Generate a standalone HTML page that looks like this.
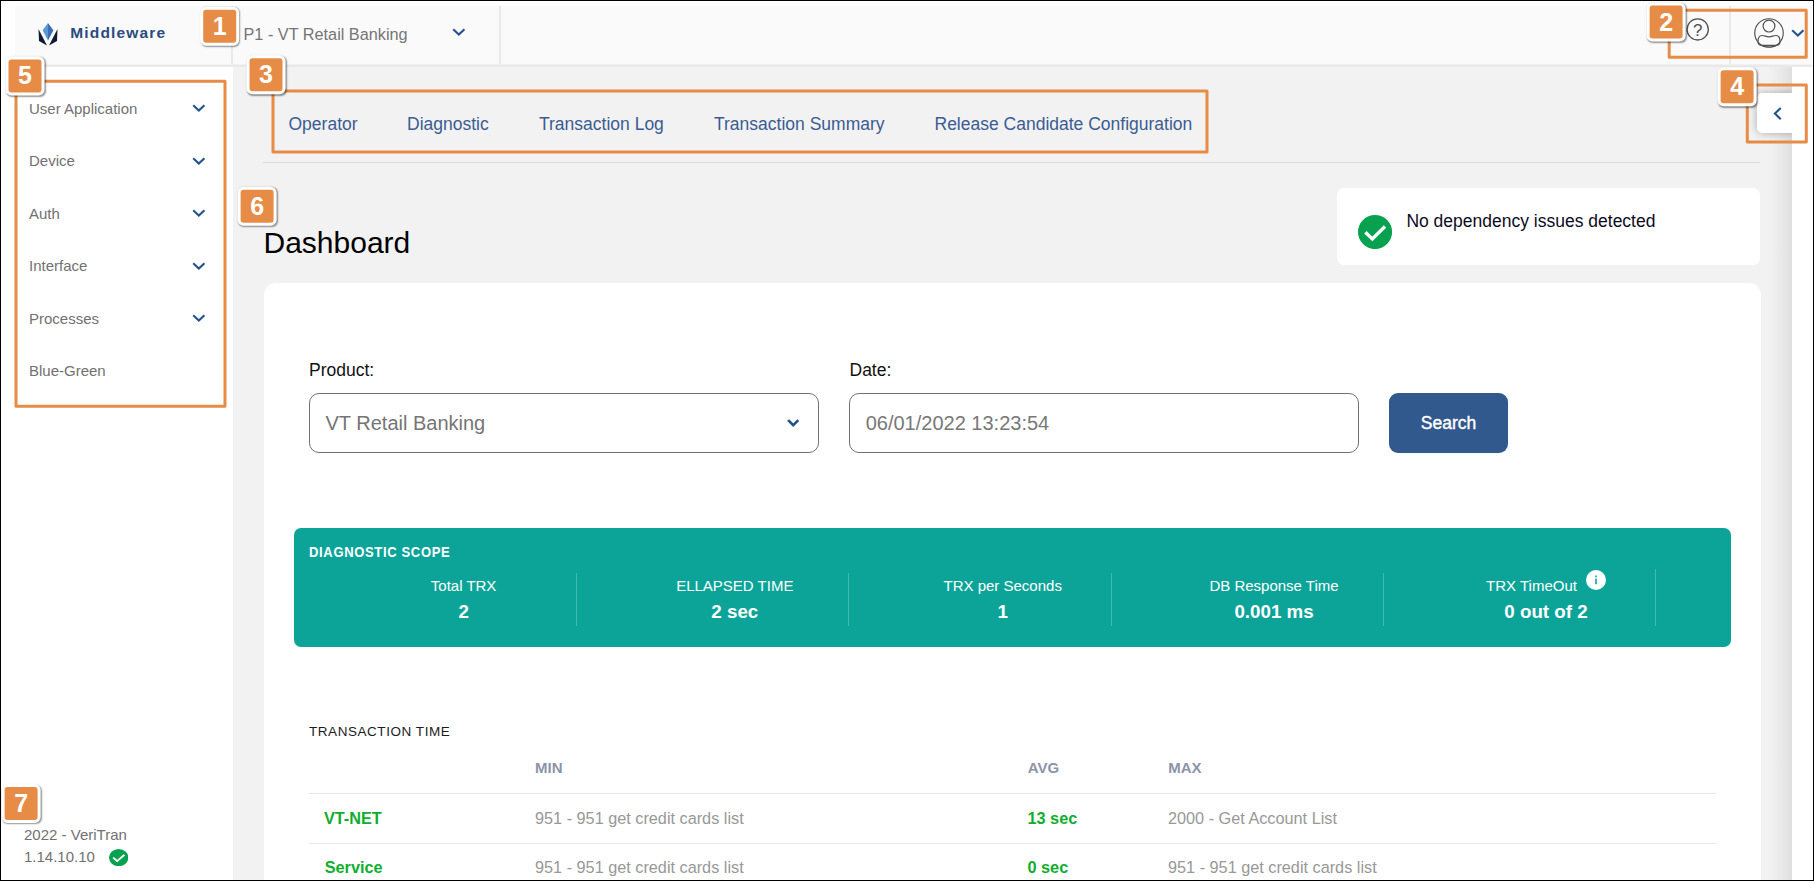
<!DOCTYPE html>
<html lang="en"><head><meta charset="utf-8"><title>Middleware Dashboard</title>
<style>
html,body{margin:0;padding:0;}
body{width:1814px;height:881px;position:relative;overflow:hidden;background:#fff;font-family:"Liberation Sans",Arial,sans-serif;}
.b{position:absolute;box-sizing:content-box;}
.t{position:absolute;line-height:1;white-space:nowrap;margin:0;padding:0;font-weight:400;text-decoration:none;}
.badge{position:absolute;box-sizing:content-box;border:3px solid #fff;border-radius:6px;background:#e68c46;color:#fff;font-weight:700;font-size:25px;line-height:32.6px;text-align:center;box-shadow:0.8px 1px 1.6px rgba(0,0,0,.42);}
</style></head><body>

<header>
<div class="b" style="left:15px;top:6px;width:1797px;height:59px;background:#fafafa;"></div>
<div class="b" style="left:15px;top:64px;width:1797px;height:1px;background:#f1f1f1;"></div>
<div class="b" style="left:15px;top:65px;width:1797px;height:2px;background:#e9e9e9;"></div>
<div class="b" style="left:231.1px;top:6px;width:1.8px;height:58px;background:#e9e9e9;"></div>
<div class="b" style="left:499.2px;top:6px;width:1.9px;height:58px;background:#e9e9e9;"></div>
<div class="b" style="left:1728.9px;top:6px;width:1.8px;height:58px;background:#e9e9e9;"></div>
<svg class="b" style="left:36.6px;top:22px" width="22" height="24" viewBox="0 0 22 24">
<path d="M11 1 L5.6 8.2 L11 18.5 Z" fill="#5b9bd5"/>
<path d="M11 1 L16.4 8.2 L11 18.5 Z" fill="#3b6eb5"/>
<path d="M1.5 7 L2 19 L10 23.5 Z" fill="#0f1a33"/>
<path d="M20.5 7 L20 19 L12 23.5 Z" fill="#0f1a33"/>
</svg>
<div class="t" style="left:70.3px;top:25px;font-size:15.5px;color:#2a4a80;font-weight:700;letter-spacing:1.15px;">Middleware</div>
<div class="t" style="left:243.5px;top:26px;font-size:16.25px;color:#757575;">P1 - VT Retail Banking</div>
<svg class="b" style="left:452.45px;top:28.1px" width="13.7" height="8.6" viewBox="0 0 13.7 8.6"><path d="M2 2 L6.85 6.6 L11.7 2" fill="none" stroke="#24528f" stroke-width="2.1" stroke-linecap="square" stroke-linejoin="miter"/></svg>
<svg class="b" style="left:1685px;top:17px" width="26" height="26" viewBox="0 0 26 26"><circle cx="12.7" cy="12.4" r="10.6" fill="none" stroke="#505050" stroke-width="1.3"/></svg>
<div class="t" style="left:1697.7px;transform:translateX(-50%);top:22px;font-size:17px;color:#505050;">?</div>
<svg class="b" style="left:1753px;top:17px" width="32" height="32" viewBox="0 0 32 32">
<circle cx="16" cy="16" r="14.25" fill="none" stroke="#505050" stroke-width="1.15"/>
<circle cx="16" cy="9.1" r="5.9" fill="none" stroke="#505050" stroke-width="1.2"/>
<path d="M5 24.6 C5 21 6.6 18.5 9.2 18.5 C11.8 18.5 13 19.8 16 19.8 C19 19.8 20.2 18.5 22.8 18.5 C25.4 18.5 27 21 27 24.6 C27 27 25.2 28.4 23 28.4 L9 28.4 C6.8 28.4 5 27 5 24.6 Z" fill="none" stroke="#505050" stroke-width="1.2"/>
<path d="M9.5 29.3 Q16 30.6 22.5 29.3" fill="none" stroke="#505050" stroke-width="1.1"/>
</svg>
<svg class="b" style="left:1791.25px;top:29.0px" width="13.7" height="8.6" viewBox="0 0 13.7 8.6"><path d="M2 2 L6.85 6.6 L11.7 2" fill="none" stroke="#24528f" stroke-width="2.1" stroke-linecap="square" stroke-linejoin="miter"/></svg>
</header>
<aside>
<div class="t" style="left:29px;top:101px;font-size:15px;color:#717171;">User Application</div>
<svg class="b" style="left:191.85px;top:104.05px" width="13.7" height="8.6" viewBox="0 0 13.7 8.6"><path d="M2 2 L6.85 6.6 L11.7 2" fill="none" stroke="#24528f" stroke-width="2.1" stroke-linecap="square" stroke-linejoin="miter"/></svg>
<div class="t" style="left:29px;top:153px;font-size:15px;color:#717171;">Device</div>
<svg class="b" style="left:191.85px;top:156.55px" width="13.7" height="8.6" viewBox="0 0 13.7 8.6"><path d="M2 2 L6.85 6.6 L11.7 2" fill="none" stroke="#24528f" stroke-width="2.1" stroke-linecap="square" stroke-linejoin="miter"/></svg>
<div class="t" style="left:29px;top:206px;font-size:15px;color:#717171;">Auth</div>
<svg class="b" style="left:191.85px;top:209.05px" width="13.7" height="8.6" viewBox="0 0 13.7 8.6"><path d="M2 2 L6.85 6.6 L11.7 2" fill="none" stroke="#24528f" stroke-width="2.1" stroke-linecap="square" stroke-linejoin="miter"/></svg>
<div class="t" style="left:29px;top:258px;font-size:15px;color:#717171;">Interface</div>
<svg class="b" style="left:191.85px;top:261.55px" width="13.7" height="8.6" viewBox="0 0 13.7 8.6"><path d="M2 2 L6.85 6.6 L11.7 2" fill="none" stroke="#24528f" stroke-width="2.1" stroke-linecap="square" stroke-linejoin="miter"/></svg>
<div class="t" style="left:29px;top:311px;font-size:15px;color:#717171;">Processes</div>
<svg class="b" style="left:191.85px;top:314.05px" width="13.7" height="8.6" viewBox="0 0 13.7 8.6"><path d="M2 2 L6.85 6.6 L11.7 2" fill="none" stroke="#24528f" stroke-width="2.1" stroke-linecap="square" stroke-linejoin="miter"/></svg>
<div class="t" style="left:29px;top:363px;font-size:15px;color:#717171;">Blue-Green</div>
<div class="t" style="left:24px;top:827px;font-size:15px;color:#717171;">2022 - VeriTran</div>
<div class="t" style="left:24px;top:849px;font-size:15px;color:#717171;">1.14.10.10</div>
<svg class="b" style="left:108.8px;top:848.8px" width="19.4" height="17.2" viewBox="0 0 24 24" preserveAspectRatio="none"><circle cx="12" cy="12" r="12" fill="#07a150"/><path d="M5.2 12.1 L10.1 16.8 L19 8.1" fill="none" stroke="#fff" stroke-width="2.4" stroke-linecap="butt" stroke-linejoin="miter"/></svg>
</aside>
<main>
<div class="b" style="left:233px;top:67px;width:1559px;height:814px;background:#f2f2f2;"></div>
<nav>
<a class="t" style="left:288.5px;top:116px;font-size:17.5px;color:#3a5c93;">Operator</a>
<a class="t" style="left:407px;top:116px;font-size:17.5px;color:#3a5c93;">Diagnostic</a>
<a class="t" style="left:539px;top:116px;font-size:17.5px;color:#3a5c93;">Transaction Log</a>
<a class="t" style="left:714px;top:116px;font-size:17.5px;color:#3a5c93;">Transaction Summary</a>
<a class="t" style="left:934.5px;top:116px;font-size:17.5px;color:#3a5c93;">Release Candidate Configuration</a>
</nav>
<div class="b" style="left:263px;top:162px;width:1497px;height:1px;background:#dcdcdc;"></div>
<h1 class="t" style="left:263.5px;top:228px;font-size:30px;color:#000;">Dashboard</h1>
<div class="b" style="left:1337px;top:188px;width:423px;height:77px;background:#fff;border-radius:7px;"></div>
<svg class="b" style="left:1357.95px;top:214.85px" width="34.1" height="34.1" viewBox="0 0 24 24" preserveAspectRatio="none"><circle cx="12" cy="12" r="12" fill="#07a150"/><path d="M5.2 12.1 L10.1 16.8 L19 8.1" fill="none" stroke="#fff" stroke-width="2.4" stroke-linecap="butt" stroke-linejoin="miter"/></svg>
<div class="t" style="left:1406.4px;top:213px;font-size:17.5px;color:#0b0b1e;">No dependency issues detected</div>
<div class="b" style="left:264px;top:283px;width:1497px;height:617px;background:#fff;border-radius:12px;"></div>
<label class="t" style="left:309px;top:362px;font-size:17.5px;color:#111;">Product:</label>
<label class="t" style="left:849.5px;top:362px;font-size:17.5px;color:#111;">Date:</label>
<div class="b" style="left:309px;top:393px;width:508px;height:58px;border:1px solid #717171;border-radius:10px;background:#fff;"></div>
<div class="t" style="left:325.5px;top:413px;font-size:20px;color:#757575;">VT Retail Banking</div>
<svg class="b" style="left:786.7px;top:418.8px" width="12.4" height="8.2" viewBox="0 0 12.4 8.2"><path d="M2 2 L6.2 6.2 L10.4 2" fill="none" stroke="#24528f" stroke-width="2.6" stroke-linecap="square" stroke-linejoin="miter"/></svg>
<div class="b" style="left:849px;top:393px;width:508px;height:58px;border:1px solid #717171;border-radius:10px;background:#fff;"></div>
<div class="t" style="left:865.7px;top:413px;font-size:20px;color:#787878;">06/01/2022 13:23:54</div>
<div class="b" style="left:1389px;top:393px;width:119px;height:60px;background:#31598d;border-radius:9px;"></div>
<div class="t" style="left:1448.6px;transform:translateX(-50%);top:415px;font-size:17.5px;color:#fff;-webkit-text-stroke:0.4px #fff;">Search</div>
<div class="b" style="left:294px;top:528px;width:1437px;height:119px;background:#0ca499;border-radius:7px;"></div>
<h2 class="t" style="left:309px;top:545px;font-size:14px;color:#fff;font-weight:700;letter-spacing:0.7px;transform:scaleX(0.93);transform-origin:0 0;">DIAGNOSTIC SCOPE</h2>
<div class="b" style="left:576px;top:573px;width:1px;height:53px;background:rgba(255,255,255,.23);"></div>
<div class="b" style="left:848px;top:573px;width:1px;height:53px;background:rgba(255,255,255,.23);"></div>
<div class="b" style="left:1111px;top:573px;width:1px;height:53px;background:rgba(255,255,255,.23);"></div>
<div class="b" style="left:1383px;top:573px;width:1px;height:53px;background:rgba(255,255,255,.23);"></div>
<div class="b" style="left:1655px;top:569px;width:1px;height:57px;background:rgba(255,255,255,.23);"></div>
<div class="t" style="left:463.6px;transform:translateX(-50%);top:578px;font-size:15px;color:#fff;">Total TRX</div>
<div class="t" style="left:463.6px;transform:translateX(-50%);top:603px;font-size:18.75px;color:#fff;font-weight:700;">2</div>
<div class="t" style="left:734.8px;transform:translateX(-50%);top:578px;font-size:15px;color:#fff;">ELLAPSED TIME</div>
<div class="t" style="left:734.8px;transform:translateX(-50%);top:603px;font-size:18.75px;color:#fff;font-weight:700;">2 sec</div>
<div class="t" style="left:1002.7px;transform:translateX(-50%);top:578px;font-size:15px;color:#fff;">TRX per Seconds</div>
<div class="t" style="left:1002.7px;transform:translateX(-50%);top:603px;font-size:18.75px;color:#fff;font-weight:700;">1</div>
<div class="t" style="left:1274px;transform:translateX(-50%);top:578px;font-size:15px;color:#fff;">DB Response Time</div>
<div class="t" style="left:1274px;transform:translateX(-50%);top:603px;font-size:18.75px;color:#fff;font-weight:700;">0.001 ms</div>
<div class="t" style="left:1531.5px;transform:translateX(-50%);top:578px;font-size:15px;color:#fff;">TRX TimeOut</div>
<div class="t" style="left:1546px;transform:translateX(-50%);top:603px;font-size:18.75px;color:#fff;font-weight:700;">0 out of 2</div>
<svg class="b" style="left:1585.8px;top:569.5px" width="20" height="20" viewBox="0 0 20 20"><circle cx="10" cy="10" r="10" fill="#fff"/><rect x="9.2" y="8.6" width="1.6" height="5.6" fill="#0ca499"/><rect x="9.2" y="5.5" width="1.6" height="1.8" fill="#0ca499"/></svg>
<h2 class="t" style="left:309px;top:725px;font-size:13.5px;color:#1c1c1c;letter-spacing:0.55px;">TRANSACTION TIME</h2>
<div class="t" style="left:535px;top:760px;font-size:15px;color:#8c94a8;font-weight:700;">MIN</div>
<div class="t" style="left:1027.8px;top:760px;font-size:15px;color:#8c94a8;font-weight:700;">AVG</div>
<div class="t" style="left:1168.3px;top:760px;font-size:15px;color:#8c94a8;font-weight:700;">MAX</div>
<div class="b" style="left:309px;top:793px;width:1407px;height:1px;background:#e6e8ee;"></div>
<div class="b" style="left:309px;top:843px;width:1407px;height:1px;background:#e6e8ee;"></div>
<div class="t" style="left:324px;top:810px;font-size:16.25px;color:#0fae2e;font-weight:700;">VT-NET</div>
<div class="t" style="left:535px;top:810px;font-size:16.25px;color:#989898;">951 - 951 get credit cards list</div>
<div class="t" style="left:1027.5px;top:810px;font-size:16.25px;color:#0fae2e;font-weight:700;">13 sec</div>
<div class="t" style="left:1168px;top:810px;font-size:16.25px;color:#989898;">2000 - Get Account List</div>
<div class="t" style="left:324.7px;top:859px;font-size:16.25px;color:#0fae2e;font-weight:700;">Service</div>
<div class="t" style="left:535px;top:859px;font-size:16.25px;color:#989898;">951 - 951 get credit cards list</div>
<div class="t" style="left:1027.5px;top:859px;font-size:16.25px;color:#0fae2e;font-weight:700;">0 sec</div>
<div class="t" style="left:1168px;top:859px;font-size:16.25px;color:#989898;">951 - 951 get credit cards list</div>
</main>
<aside>
<div class="b" style="left:1768px;top:67px;width:24px;height:814px;background:linear-gradient(to right,rgba(0,0,0,0) 0%,rgba(0,0,0,.03) 50%,rgba(0,0,0,.078) 100%);"></div>
<div class="b" style="left:1757px;top:93px;width:38px;height:40px;background:#fff;border-radius:5px 0 0 5px;box-shadow:0 0 9px rgba(0,0,0,.3);"></div>
<div class="b" style="left:1792px;top:67px;width:20px;height:814px;background:#fff;"></div>
<svg class="b" style="left:1770px;top:105px" width="16" height="18" viewBox="0 0 16 18"><path d="M10 3.8 L4.9 8.6 L10 13.5" fill="none" stroke="#24528f" stroke-width="2.1" stroke-linecap="square" stroke-linejoin="miter"/></svg>
</aside>
<div>
<div class="b" style="left:14px;top:79px;width:205.9px;height:322.1px;border:3px solid #e68c46;border-radius:1.5px;transform:translate(0.5px,0.7px);"></div>
<div class="b" style="left:271px;top:89px;width:930.9px;height:57.8px;border:3px solid #e68c46;border-radius:1.5px;transform:translate(0.5px,0.5px);"></div>
<div class="b" style="left:1667px;top:8px;width:133.5px;height:44.4px;border:3px solid #e68c46;border-radius:1.5px;transform:translate(0.7px,0.7px);"></div>
<div class="b" style="left:1745px;top:83px;width:55.9px;height:54.3px;border:3px solid #e68c46;border-radius:1.5px;transform:translate(0.8px,0.4px);"></div>
<div class="badge" style="left:200px;top:6px;width:33px;height:33px;transform:translate(0.2px,0.8px);">1</div>
<div class="badge" style="left:1646px;top:2px;width:33px;height:33px;transform:translate(0.6px,0.6px);">2</div>
<div class="badge" style="left:246px;top:55px;width:33px;height:33px;transform:translate(0.5px,0.3px);">3</div>
<div class="badge" style="left:1717px;top:67px;width:33px;height:33px;transform:translate(0.6px,0.3px);">4</div>
<div class="badge" style="left:5px;top:56px;width:33px;height:33px;transform:translate(0.5px,0.4px);">5</div>
<div class="badge" style="left:237px;top:186px;width:33px;height:33px;transform:translate(0.6px,0.7px);">6</div>
<div class="badge" style="left:1px;top:784px;width:33px;height:33px;transform:translate(0.6px,0px);">7</div>
</div>
<div class="b" style="left:0px;top:0px;width:1814px;height:1px;background:#000;"></div>
<div class="b" style="left:0px;top:0px;width:1px;height:881px;background:#000;"></div>
<div class="b" style="left:1813px;top:0px;width:1px;height:881px;background:#000;"></div>
<div class="b" style="left:0px;top:880px;width:1814px;height:1px;background:#000;"></div>
</body></html>
